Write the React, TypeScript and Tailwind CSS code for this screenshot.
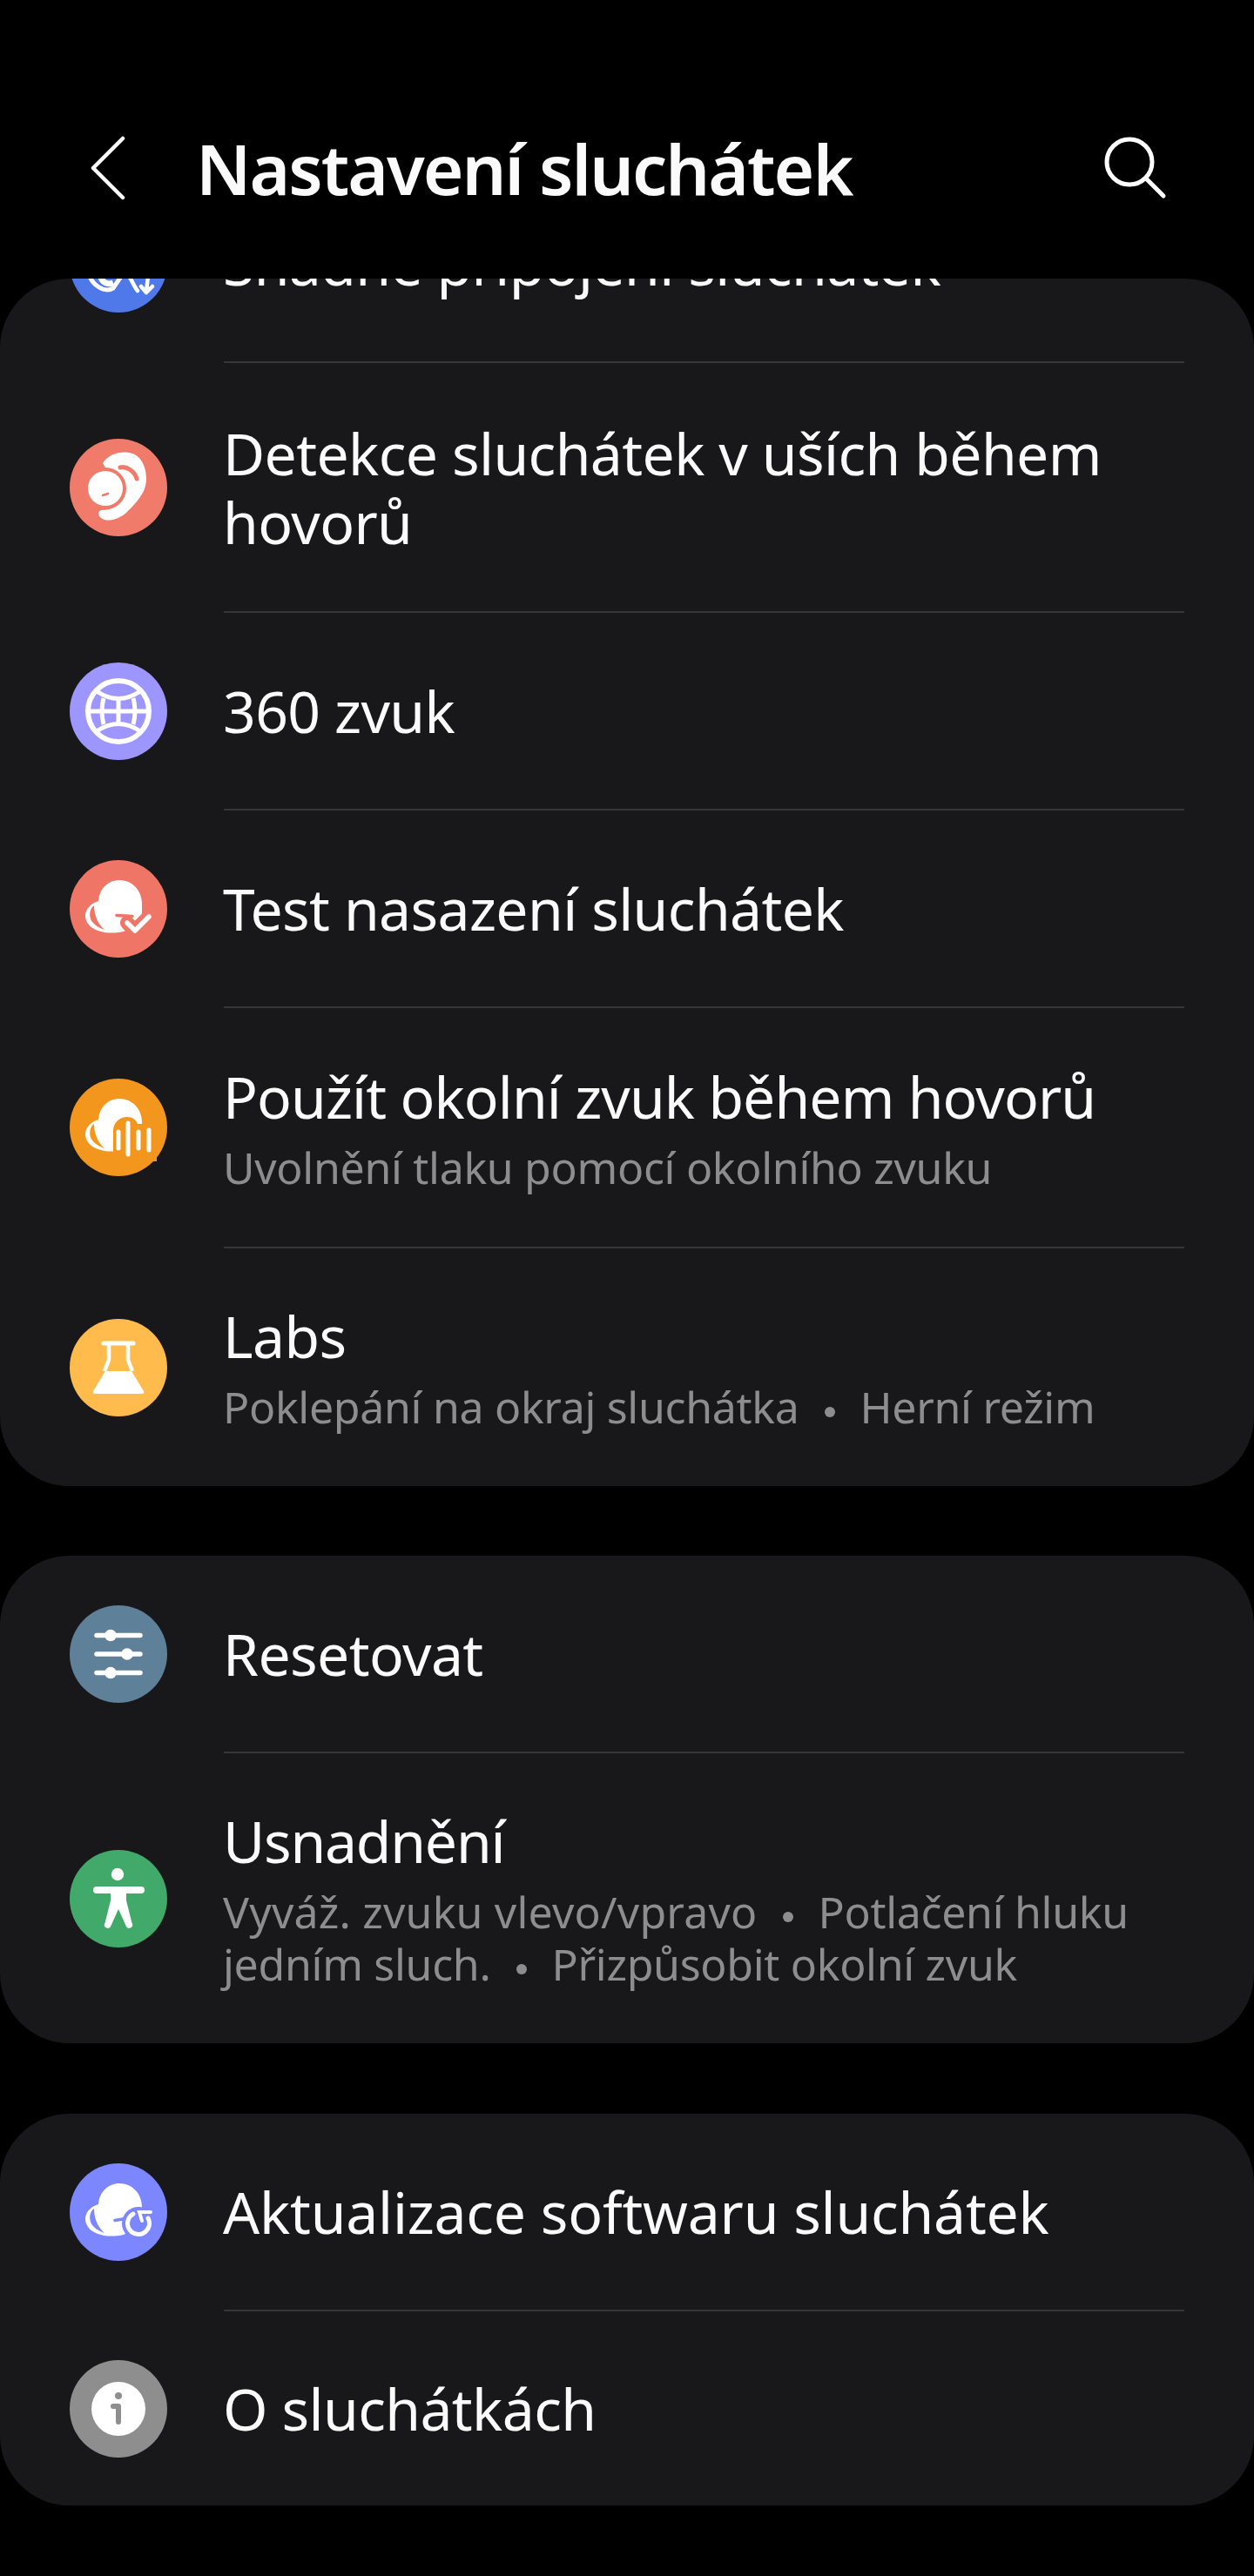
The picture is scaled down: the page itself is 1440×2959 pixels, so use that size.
import React from "react";

const W = "#ffffff";

function Ico({ bg, children }: { bg: string; children?: React.ReactNode }) {
  return (
    <svg width="112" height="112" viewBox="0 0 112 112" className="shrink-0">
      <circle cx="56" cy="56" r="56" fill={bg} />
      {children}
    </svg>
  );
}

function Bud({ bg }: { bg: string }) {
  return (
    <>
      <path d="M33 47C34 32 45 23 57 23C72 23 83 35 83 50L83 70L62 82C52 84 42 84 36 82C26 80 18 73 18 64C18 56 24 50 33 47Z" fill={W} />
      <path d="M28 52C22 56 22 66 26 71C29 75 34 78 40 80C33 74 28 64 28 52Z" fill={bg} />
    </>
  );
}

const icons: Record<string, React.ReactNode> = {
  blue: (
    <Ico bg="#4f79e8">
      <path d="M22 66C24 80 40 90 50 84L58 72" stroke={W} strokeWidth="5" fill="none" strokeLinecap="round" />
      <path d="M36 72C38 78 44 80 50 78" stroke={W} strokeWidth="7" fill="none" />
      <path d="M68 70C72 76 74 82 78 87" stroke={W} strokeWidth="4.5" fill="none" strokeLinecap="round" />
      <path d="M90 70L88 88M82 82L88 89L95 82" stroke={W} strokeWidth="4.5" fill="none" strokeLinecap="round" strokeLinejoin="round" />
    </Ico>
  ),
  ear: (
    <Ico bg="#f17b6b">
      <path d="M38 28C44 18 58 14 68 16C82 18 88 32 88 46C88 62 76 74 66 84C58 92 46 95 40 93C33 91 31 84 36 82C48 82 58 78 60 66Z" fill={W} />
      <circle cx="41" cy="57" r="24" fill="#f17b6b" />
      <circle cx="41" cy="57" r="20" fill={W} />
      <path d="M38 65L44 63" stroke="#f17b6b" strokeWidth="2.5" strokeLinecap="round" />
      <path d="M58 33C66 31 75 38 77 46" stroke="#f17b6b" strokeWidth="5" fill="none" strokeLinecap="round" />
    </Ico>
  ),
  globe: (
    <Ico bg="#9e96ff">
      <g stroke={W} strokeWidth="5" fill="none">
        <circle cx="56" cy="56" r="35" strokeWidth="6" />
        <path d="M31 33Q56 50 81 33M31 79Q56 62 81 79M22 56H90M39 41Q35 56 39 71M56 44V68M73 41Q77 56 73 71" />
      </g>
    </Ico>
  ),
  test: (
    <Ico bg="#ef7566">
      <Bud bg="#ef7566" />
      <path d="M66 72L75 81L91 65" stroke="#ef7566" strokeWidth="16" fill="none" strokeLinecap="round" strokeLinejoin="round" />
      <path d="M54 63.5L72 64.5" stroke="#ef7566" strokeWidth="3.5" strokeLinecap="round" />
      <path d="M66 72L75 81L91 65" stroke={W} strokeWidth="5.5" fill="none" strokeLinecap="round" strokeLinejoin="round" />
    </Ico>
  ),
  orange: (
    <Ico bg="#f3961d">
      <Bud bg="#f3961d" />
      <path d="M50 90V60C50 50 58 44 66 44C72 44 76 47 78 52L100 52V95H50Z" fill="#f3961d" />
      <path d="M56 61V80M67 51V87M79 61V80M91 59V82" stroke={W} strokeWidth="5" strokeLinecap="round" />
    </Ico>
  ),
  labs: (
    <Ico bg="#ffbc4d">
      <path d="M39 28H73" stroke={W} strokeWidth="5" strokeLinecap="round" />
      <path d="M45 28V47L40 60M67 28V47L72 60" stroke={W} strokeWidth="4.5" fill="none" />
      <path d="M41 60H71L85 83Q86 86 83 86H29Q26 86 27 83Z" fill={W} />
    </Ico>
  ),
  reset: (
    <Ico bg="#5f8099">
      <g stroke={W} strokeWidth="5.5" strokeLinecap="round">
        <path d="M31 34.5H81M31 56H81M31 77.5H81" />
      </g>
      <circle cx="47" cy="34.5" r="6.8" fill={W} />
      <circle cx="66" cy="56" r="6.8" fill={W} />
      <circle cx="47" cy="77.5" r="6.8" fill={W} />
    </Ico>
  ),
  access: (
    <Ico bg="#41a96a">
      <circle cx="55" cy="28" r="7.2" fill={W} />
      <path d="M31 46H82" stroke={W} strokeWidth="8" strokeLinecap="round" />
      <path d="M47 46H65V58L71.5 84A3.6 3.6 0 0 1 65 88L56 68L47 88A3.6 3.6 0 0 1 40.5 84L47 58Z" fill={W} />
    </Ico>
  ),
  update: (
    <Ico bg="#7b86ff">
      <Bud bg="#7b86ff" />
      <circle cx="79" cy="69" r="19" fill="#7b86ff" />
      <path d="M52 65.5L64 63.5" stroke="#7b86ff" strokeWidth="3.5" strokeLinecap="round" />
      <path d="M73 58A12.5 12.5 0 1 0 90 63" stroke={W} strokeWidth="5" fill="none" strokeLinecap="round" />
      <path d="M93 56H80L83 66" stroke={W} strokeWidth="4" fill="none" strokeLinecap="round" />
    </Ico>
  ),
  info: (
    <Ico bg="#8e8e8e">
      <circle cx="56" cy="56" r="31" fill={W} />
      <circle cx="56" cy="41" r="4" fill="#8e8e8e" />
      <path d="M50 53H56V71" stroke="#8e8e8e" strokeWidth="6" fill="none" strokeLinecap="round" strokeLinejoin="round" />
    </Ico>
  ),
};

function Sep() {
  return <div className="ml-[257px] mr-[80px] h-[2px] bg-[#373739]" />;
}

function Row({
  icon,
  title,
  sub,
  h,
  clip,
  tr = "tracking-[-0.6px]",
}: {
  icon: string;
  title: React.ReactNode;
  sub?: React.ReactNode;
  h: string;
  clip?: boolean;
  tr?: string;
}) {
  return (
    <div className={`flex items-center pl-[80px] pr-[60px] ${h} ${clip ? "-mt-[130px]" : ""}`}>
      <div className="w-[176px] shrink-0">{icons[icon]}</div>
      <div className="min-w-0">
        <div className={`text-[66px] leading-[79px] text-[#fafafa] ${tr}`}>{title}</div>
        {sub && <div className="mt-[12px] text-[50px] leading-[60px] text-[#8d8d8f] tracking-[-0.3px]">{sub}</div>}
      </div>
    </div>
  );
}

function Dot() {
  return <span className="mx-[29px] inline-block h-[12px] w-[12px] rounded-full bg-[#8d8d8f] align-middle" />;
}

export default function App() {
  return (
    <div className="min-h-[2959px] w-[1440px] overflow-hidden bg-black font-['Noto_Sans','Open_Sans',sans-serif]">
      <header className="flex h-[320px] items-center pt-[66px]">
        <svg width="46" height="76" viewBox="0 0 46 76" className="ml-[102px] mt-[2px] shrink-0" fill="none">
          <path d="M39 3L5 37L39 71" stroke={W} strokeWidth="4.5" strokeLinecap="round" strokeLinejoin="round" />
        </svg>
        <h1 className="ml-[77px] text-[80px] font-semibold leading-[100px] text-[#fafafa] tracking-[-2px]">
          Nastavení sluchátek
        </h1>
        <svg width="76" height="76" viewBox="0 0 76 76" className="ml-auto mr-[100px] mt-[2px] shrink-0" fill="none">
          <circle cx="33" cy="30" r="26" stroke={W} strokeWidth="5" />
          <path d="M52 49L72 69" stroke={W} strokeWidth="5" strokeLinecap="round" />
        </svg>
      </header>

      <section className="overflow-hidden rounded-[80px] bg-[#18181a]">
        <Row clip icon="blue" title="Snadné připojení sluchátek" h="h-[225px]" />
        <Sep />
        <Row icon="ear" title={<>Detekce sluchátek v uších během<br />hovorů</>} h="h-[285px]" />
        <Sep />
        <Row icon="globe" title="360 zvuk" h="h-[225px]" />
        <Sep />
        <Row icon="test" title="Test nasazení sluchátek" h="h-[225px]" />
        <Sep />
        <Row icon="orange" tr="tracking-[-0.9px]" title="Použít okolní zvuk během hovorů" sub="Uvolnění tlaku pomocí okolního zvuku" h="h-[274px]" />
        <Sep />
        <Row icon="labs" title="Labs" sub={<>Poklepání na okraj sluchátka<Dot />Herní režim</>} h="h-[273px]" />
      </section>

      <section className="mt-[80px] overflow-hidden rounded-[80px] bg-[#18181a]">
        <Row icon="reset" title="Resetovat" h="h-[225px]" />
        <Sep />
        <Row
          icon="access"
          tr="tracking-[-1.2px]"
          title="Usnadnění"
          sub={<><span className="tracking-[0.2px]">Vyváž. zvuku vlevo/vpravo</span><Dot />Potlačení hluku<br />jedním sluch.<Dot />Přizpůsobit okolní zvuk</>}
          h="h-[333px]"
        />
      </section>

      <section className="mt-[81px] overflow-hidden rounded-[80px] bg-[#18181a]">
        <Row icon="update" tr="tracking-[-0.2px]" title="Aktualizace softwaru sluchátek" h="h-[225px]" />
        <Sep />
        <Row icon="info" title="O sluchátkách" h="h-[223px]" />
      </section>
    </div>
  );
}
